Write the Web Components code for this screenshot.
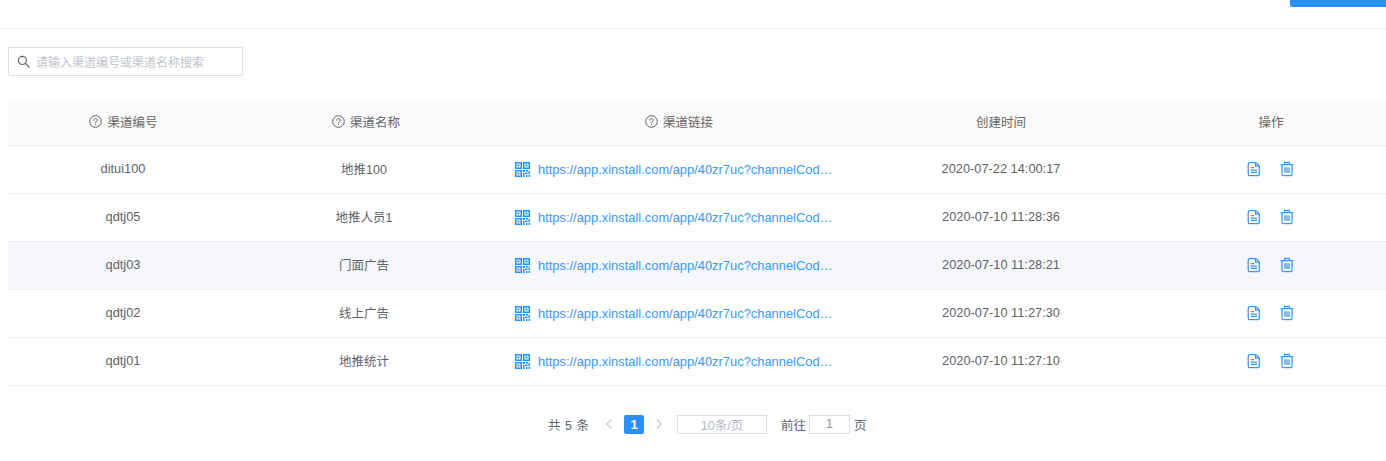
<!DOCTYPE html>
<html>
<head>
<meta charset="utf-8">
<style>
html, body { margin: 0; padding: 0; background: #fff; overflow: hidden; }
body { font-family: "Liberation Sans", "Noto Sans CJK SC", sans-serif; color: #606266; }
</style>
</head>
<body>
<channel-page></channel-page>
<script>
const font = `"Liberation Sans", "Noto Sans CJK SC", sans-serif`

const channels = [
    { code: 'ditui100', name: '地推100', time: '2020-07-22 14:00:17' },
    { code: 'qdtj05', name: '地推人员1', time: '2020-07-10 11:28:36' },
    { code: 'qdtj03', name: '门面广告', time: '2020-07-10 11:28:21', hover: true },
    { code: 'qdtj02', name: '线上广告', time: '2020-07-10 11:27:30' },
    { code: 'qdtj01', name: '地推统计', time: '2020-07-10 11:27:10' }
]
const link = 'https://app.xinstall.com/app/40zr7uc?channelCode=ditui100'

// column widths shared by the head and the rows
const columns = `grid-template-columns: 230px 256px 352px 310px 230px;`

class SearchBox extends HTMLElement {
    constructor() {
        super()
        this.attachShadow({ mode: 'open' }).innerHTML = `
            <style>
                :host { display: flex; align-items: center; box-sizing: border-box; width: 235px; height: 29px; border: 1px solid #dcdfe6; border-radius: 1px; padding-left: 8px; font: 12px ${font}; color: #c0c4cc; }
                svg { width: 13px; height: 13px; margin-right: 6px; flex: none; }
            </style>
            <svg viewBox="0 0 13 13" fill="none" stroke="#606266" stroke-width="1.2"><circle cx="5.4" cy="5.4" r="4"/><path d="M8.4 8.4l3.6 3.6" stroke-linecap="round"/></svg>
            <span><slot></slot></span>`
    }
}

class HeadCell extends HTMLElement {
    constructor() {
        super()
        const help = this.hasAttribute('help') ? `<svg viewBox="0 0 13 13" fill="none" stroke="#606266"><circle cx="6.5" cy="6.5" r="5.8"/><path d="M4.7 5.2c0-1 .8-1.7 1.8-1.7s1.8.7 1.8 1.6c0 1.3-1.8 1.4-1.8 2.8" stroke-linecap="round"/><path d="M6.5 9.2v.9"/></svg>` : ''
        this.attachShadow({ mode: 'open' }).innerHTML = `
            <style>
                :host { display: flex; align-items: center; justify-content: center; gap: 5px; }
                svg { width: 13px; height: 13px; flex: none; }
            </style>
            ${help}<slot></slot>`
    }
}

class ChannelRow extends HTMLElement {
    constructor() {
        super()
        const root = this.attachShadow({ mode: 'open' })
        root.innerHTML = `
            <style>
                :host { display: grid; ${columns} height: 48px; box-sizing: border-box; padding-bottom: 2px; border-bottom: 1px solid #ebeef5; align-items: center; font-size: 12.8px; color: #606266; text-align: center; }
                :host([hover]) { background: #f5f7fa; }
                .name { font-size: 12.5px; padding-right: 4px; }
                .link { display: flex; align-items: center; padding: 2px 0 0 21px; min-width: 0; }
                .link svg { width: 15px; height: 15px; flex: none; margin-right: 8px; }
                .url { width: 296px; font-size: 12.9px; color: #3a97f8; white-space: nowrap; overflow: hidden; text-overflow: ellipsis; text-align: left; }
                .ops { display: flex; justify-content: center; gap: 17px; padding-right: 2px; }
                .ops svg { width: 16px; height: 16px; }
            </style>
            <div class="code"></div>
            <div class="name"></div>
            <div class="link">
                <svg viewBox="0 0 15 15" fill="#2a8ff7"><path fill-rule="evenodd" d="M0 0h7v7H0zM1.5 1.5v4h4v-4zM8 0h7v7H8zM9.5 1.5v4h4v-4zM0 8h7v7H0zM1.5 9.5v4h4v-4z"/><path d="M2.5 2.5h2v2h-2zM10.5 2.5h2v2h-2zM2.5 10.5h2v2h-2zM8 8h2v2H8zM11 8h2v1.5h-2zM13.5 9h1.5v3h-1.5zM10 10.5h2.5V12H10zM8 11h1.5v4H8zM11 13h1.5v2H11zM13.5 13H15v2h-1.5z"/></svg>
                <span class="url"></span>
            </div>
            <div class="time"></div>
            <div class="ops">
                <svg viewBox="0 0 16 16" fill="none" stroke="#3a97f8" stroke-width="1.25" stroke-linejoin="round"><path d="M3.8 1.6h6l3.6 3.4V13a1.6 1.6 0 0 1-1.6 1.6H3.8A1.6 1.6 0 0 1 2.2 13V3.2a1.6 1.6 0 0 1 1.6-1.6z"/><path d="M9.6 1.8v3.4h3.6M4.8 6.6h3.4M4.8 9h6.4M4.8 11.4h6.4"/></svg>
                <svg viewBox="0 0 16 16" fill="none" stroke="#3a97f8" stroke-width="1.25" stroke-linejoin="round"><path d="M1.6 3.6h12.8M5.6 3.4V1.4h4.8v2M3 3.6V13a1.6 1.6 0 0 0 1.6 1.6h6.8A1.6 1.6 0 0 0 13 13V3.6M6 6.2v5.8M8 6.2v5.8M10 6.2v5.8"/></svg>
            </div>`
        root.querySelector('.code').textContent = this.getAttribute('code')
        root.querySelector('.name').textContent = this.getAttribute('name')
        root.querySelector('.url').textContent = this.getAttribute('url')
        root.querySelector('.time').textContent = this.getAttribute('time')
    }
}

class ChannelTable extends HTMLElement {
    constructor() {
        super()
        this.attachShadow({ mode: 'open' }).innerHTML = `
            <style>
                :host { display: block; font-size: 12.5px; color: #606266; }
                .head { display: grid; ${columns} height: 46px; box-sizing: border-box; padding-bottom: 2px; align-items: center; background: #fafafa; border-bottom: 1px solid #ebeef5; color: #666; }
                .first { padding-left: 1px; }
                .shift { padding-left: 18px; }
            </style>
            <div class="head">
                <head-cell help class="first">渠道编号</head-cell>
                <head-cell help>渠道名称</head-cell>
                <head-cell help class="shift">渠道链接</head-cell>
                <head-cell>创建时间</head-cell>
                <head-cell>操作</head-cell>
            </div>
            ${channels.map(c => `<channel-row code="${c.code}" name="${c.name}" time="${c.time}" url="${link}" ${c.hover ? 'hover' : ''}></channel-row>`).join('')}`
    }
}

class PageBar extends HTMLElement {
    constructor() {
        super()
        this.attachShadow({ mode: 'open' }).innerHTML = `
            <style>
                :host { display: flex; align-items: center; height: 20px; padding-left: 540px; font-size: 12.5px; color: #606266; }
                .total { width: 40px; margin-right: 16px; letter-spacing: .5px; white-space: nowrap; }
                .arrow { width: 10px; height: 10px; flex: none; }
                .current { width: 20px; height: 19px; margin: 0 10px; background: #2a8ff7; color: #fff; font-weight: bold; font-size: 13px; border-radius: 2px; display: flex; align-items: center; justify-content: center; }
                .size, .jump { box-sizing: border-box; height: 19px; border: 1px solid #dcdfe6; display: flex; align-items: center; justify-content: center; color: #b4b8bf; }
                .size { width: 90px; margin: 0 14px 0 13px; }
                .jump { width: 41px; margin: 0 4px 0 3px; color: #909399; }
            </style>
            <span class="total">共 5 条</span>
            <svg class="arrow" viewBox="0 0 10 10" fill="none" stroke="#c0c4cc" stroke-width="1.1"><path d="M7.5 .5L3 5l4.5 4.5"/></svg>
            <span class="current">1</span>
            <svg class="arrow" viewBox="0 0 10 10" fill="none" stroke="#c0c4cc" stroke-width="1.1"><path d="M3 .5L7.5 5 3 9.5"/></svg>
            <span class="size">10条/页</span>
            <span>前往</span>
            <span class="jump">1</span>
            <span>页</span>`
    }
}

class ChannelPage extends HTMLElement {
    constructor() {
        super()
        this.attachShadow({ mode: 'open' }).innerHTML = `
            <style>
                :host { display: block; padding-left: 8px; height: 461px; overflow: hidden; box-sizing: border-box; }
                .top { display: flex; justify-content: flex-end; height: 28px; margin-left: -8px; border-bottom: 1px solid #ebebeb; }
                .btn { width: 96px; height: 7px; background: #2a8ff7; border-radius: 0 0 0 2px; }
                .search { padding: 18px 0 24px; }
                .pager { padding-top: 28px; }
            </style>
            <div class="top"><div class="btn"></div></div>
            <div class="search"><search-box>请输入渠道编号或渠道名称搜索</search-box></div>
            <channel-table></channel-table>
            <div class="pager"><page-bar></page-bar></div>`
    }
}

customElements.define('search-box', SearchBox)
customElements.define('head-cell', HeadCell)
customElements.define('channel-row', ChannelRow)
customElements.define('channel-table', ChannelTable)
customElements.define('page-bar', PageBar)
customElements.define('channel-page', ChannelPage)
</script>
</body>
</html>
